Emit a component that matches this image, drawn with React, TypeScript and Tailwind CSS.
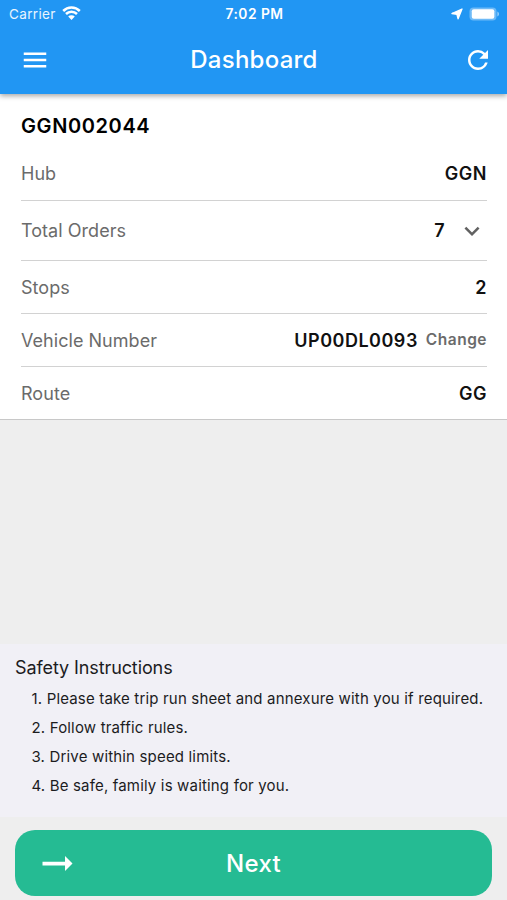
import { ReactNode } from "react";
import clsx from "clsx";

const instructions = [
  "1. Please take trip run sheet and annexure with you if required.",
  "2. Follow traffic rules.",
  "3. Drive within speed limits.",
  "4. Be safe, family is waiting for you.",
];

type IconProps = { d: string; className?: string };

function Icon({ d, className }: IconProps) {
  return (
    <svg viewBox="0 0 24 24" fill="currentColor" className={className}>
      <path d={d} />
    </svg>
  );
}

function StatusBar() {
  return (
    <div className="grid grid-cols-3 items-center h-7 pl-[9px] pr-[7px] text-[13.5px] leading-none">
      <div className="flex items-center gap-[6px] text-white/90">
        <span className="pt-px tracking-[0.35px]">Carrier</span>
        <svg viewBox="0 0 19 14" className="w-[19px] h-[14px] -mt-[2px]" fill="none">
          <path
            d="M1.2 5a11.7 11.7 0 0 1 16.6 0M4 8a7.8 7.8 0 0 1 11 0"
            stroke="white"
            strokeWidth="2.5"
          />
          <path
            d="M9.5 13.9 6.2 10.5a4.7 4.7 0 0 1 6.6 0z"
            fill="white"
          />
        </svg>
      </div>
      <span className="pt-[2px] text-center font-semibold tracking-[0.5px] text-[13.8px] whitespace-nowrap">
        7:02 PM
      </span>
      <div className="flex items-center justify-end gap-[6px] -mt-px">
        <svg viewBox="0 0 12 12" className="w-3 h-3" fill="white">
          <path
            d="M11 1 7.1 10.8 5.9 6.3.9 5.5z"
            stroke="white"
            strokeWidth="1.3"
            strokeLinejoin="round"
          />
        </svg>
        <svg viewBox="0 0 31 14" className="w-[31px] h-[14px]">
          <rect x=".5" y=".5" width="27" height="13" rx="4" fill="white" fillOpacity=".35" />
          <rect x="2.8" y="2.3" width="22.5" height="9.4" rx="2" fill="white" />
          <path d="M28.3 4.5c2.3.8 2.3 4.2 0 5z" fill="white" fillOpacity=".5" />
        </svg>
      </div>
    </div>
  );
}

type RowProps = {
  label: string;
  className?: string;
  children: ReactNode;
};

function Row({ label, className, children }: RowProps) {
  return (
    <div className={clsx("flex items-center justify-between", className)}>
      <span className="text-[18px] tracking-[0.04px] text-[#6b6b6b]">
        {label}
      </span>
      <div className="flex items-center text-[18px] font-semibold tracking-[0.5px] text-[#111]">
        {children}
      </div>
    </div>
  );
}

export default function App() {
  return (
    <div className="flex flex-col w-full h-screen overflow-hidden bg-[#eeeeee] font-['Inter',sans-serif]">
      <header className="relative z-10 h-[94px] shrink-0 bg-[#2196f3] text-white shadow-[0_2px_5px_rgba(0,0,0,0.35)]">
        <StatusBar />
        <div className="flex items-center justify-between h-16 pl-5 pr-[14px]">
          <Icon
            className="w-[30px] h-[30px]"
            d="M3 18h18v-2H3v2zm0-5h18v-2H3v2zm0-7v2h18V6H3z"
          />
          <h1 className="mr-[5px] text-[24px] font-medium tracking-[0.25px]">
            Dashboard
          </h1>
          <Icon
            className="w-[30px] h-[30px]"
            d="M17.65 6.35A7.958 7.958 0 0 0 12 4c-4.42 0-7.99 3.58-7.99 8s3.57 8 7.99 8c3.73 0 6.84-2.55 7.73-6h-2.08A5.99 5.99 0 0 1 12 18c-3.31 0-6-2.69-6-6s2.69-6 6-6c1.66 0 3.14.69 4.22 1.78L13 11h7V4l-2.35 2.35z"
          />
        </div>
      </header>

      <section className="h-[326px] shrink-0 px-5 bg-white border-b border-[#c8c8c8]">
        <h2 className="h-[53px] pt-[18px] pl-px text-[20px] leading-7 font-semibold tracking-[0.6px] text-black">
          GGN002044
        </h2>
        <div className="pl-px divide-y divide-[#d2d2d2]">
          <Row label="Hub" className="h-[54px]">
            GGN
          </Row>
          <Row label="Total Orders" className="h-[60px]">
            <span>7</span>
            <Icon
              className="w-[30px] h-[30px] ml-3 text-[#616161]"
              d="M16.59 8.59 12 13.17 7.41 8.59 6 10l6 6 6-6z"
            />
          </Row>
          <Row label="Stops" className="h-[53px]">
            2
          </Row>
          <Row label="Vehicle Number" className="h-[53px]">
            <span>UP00DL0093</span>
            <span className="ml-2 text-[15.5px] text-[#6b6b6b]">Change</span>
          </Row>
          <Row label="Route" className="h-[52px]">
            GG
          </Row>
        </div>
      </section>

      <section className="mt-auto h-[173px] shrink-0 pl-[15px] pt-[10px] bg-[#f1f0f6] text-[#1c1c1e]">
        <h3 className="text-[18px] leading-7 tracking-[-0.1px]">
          Safety Instructions
        </h3>
        <ul className="pl-[16.5px] pt-[2px] text-[15px] leading-[29px] tracking-[0.17px] whitespace-nowrap">
          {instructions.map((text) => (
            <li key={text}>{text}</li>
          ))}
        </ul>
      </section>

      <div className="h-[83px] shrink-0 px-[15px] pt-[13px]">
        <button className="grid grid-cols-3 items-center w-full h-[66px] rounded-[20px] bg-[#25bb93] text-white">
          <Icon
            className="w-[45px] h-[45px] ml-[19.5px]"
            d="M16.01 11H4v2h12.01v3L20 12l-3.99-4z"
          />
          <span className="pt-[2px] text-[24px] font-medium tracking-[0.3px]">
            Next
          </span>
        </button>
      </div>
    </div>
  );
}
